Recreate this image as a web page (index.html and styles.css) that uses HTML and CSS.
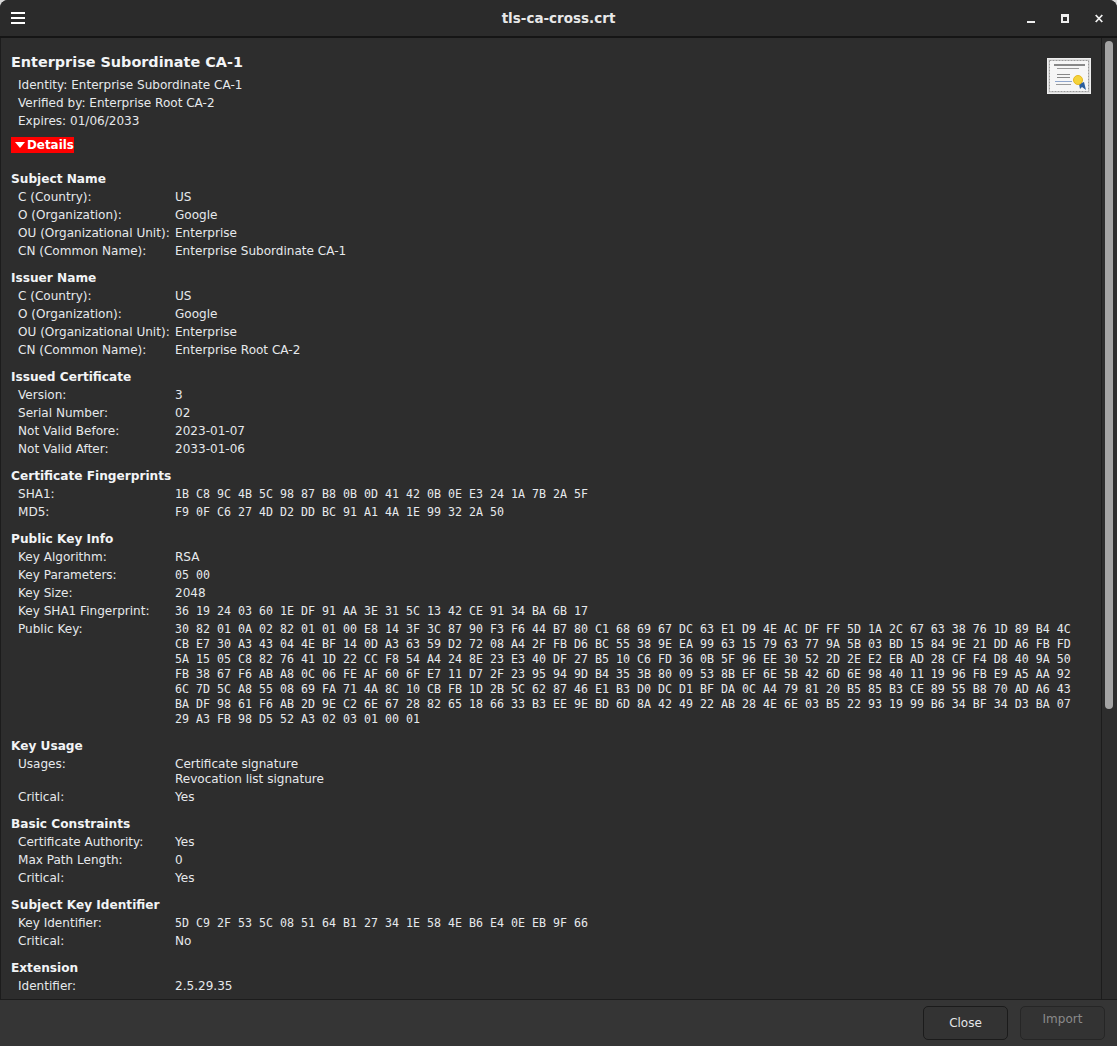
FILE: index.html
```html
<!DOCTYPE html>
<html lang="en">
<head>
  <meta charset="UTF-8">
  <title>tls-ca-cross.crt</title>
  <link rel="stylesheet" href="styles.css">
</head>
<body>
  <div class="window">
    <header class="titlebar">
      <svg class="menu-icon" width="14" height="12" viewBox="0 0 14 12"><path d="M0 0h14v2H0zM0 5h14v2H0zM0 10h14v2H0z" fill="#fff"/></svg>
      <div class="title">tls-ca-cross.crt</div>
      <div class="win-buttons">
        <svg width="8" height="9" viewBox="0 0 8 9"><path d="M0 7h8v2H0z" fill="#eee"/></svg>
        <svg width="8" height="9" viewBox="0 0 8 9"><path d="M0 0h8v9H0zM2 3v4h4V3z" fill="#eee" fill-rule="evenodd"/></svg>
        <svg width="8" height="9" viewBox="0 0 8 9"><path d="M.7 1l6.6 7M7.3 1L.7 8" stroke="#eee" stroke-width="1.8" fill="none"/></svg>
      </div>
    </header>

    <main class="main">
      <div class="content">
        <svg class="cert-icon" width="44" height="36" viewBox="0 0 44 36">
          <rect x=".5" y=".5" width="43" height="35" fill="#ddd" stroke="#eee"/>
          <rect x="2.5" y="2.5" width="39" height="31" fill="#f6f6f6" stroke="#999" stroke-dasharray="2 1"/>
          <rect x="7" y="6" width="31" height="2" fill="#888"/>
          <rect x="10" y="10" width="22" height="1" fill="#999"/>
          <rect x="10" y="16" width="13" height="1" fill="#888"/>
          <rect x="10" y="19" width="13" height="1" fill="#888"/>
          <rect x="8" y="23" width="17" height="1" fill="#8fa6cc"/>
          <rect x="9" y="26" width="15" height="1" fill="#999"/>
          <path d="M32 26l1 5 2-2 4 3-2-8z" fill="#2c5f9e"/>
          <circle cx="31" cy="22" r="4.5" fill="#f4d33a" stroke="#e8b820"/>
        </svg>

        <h1 class="cert-name">Enterprise Subordinate CA-1</h1>
        <p class="line">Identity: Enterprise Subordinate CA-1</p>
        <p class="line">Verified by: Enterprise Root CA-2</p>
        <p class="line">Expires: 01/06/2033</p>
        <div class="expander"><span class="arrow"></span>Details</div>

        <section class="group">
          <h2>Subject Name</h2>
          <div class="row"><span>C (Country):</span><span>US</span></div>
          <div class="row"><span>O (Organization):</span><span>Google</span></div>
          <div class="row"><span>OU (Organizational Unit):</span><span>Enterprise</span></div>
          <div class="row"><span>CN (Common Name):</span><span>Enterprise Subordinate CA-1</span></div>
        </section>

        <section class="group">
          <h2>Issuer Name</h2>
          <div class="row"><span>C (Country):</span><span>US</span></div>
          <div class="row"><span>O (Organization):</span><span>Google</span></div>
          <div class="row"><span>OU (Organizational Unit):</span><span>Enterprise</span></div>
          <div class="row"><span>CN (Common Name):</span><span>Enterprise Root CA-2</span></div>
        </section>

        <section class="group">
          <h2>Issued Certificate</h2>
          <div class="row"><span>Version:</span><span>3</span></div>
          <div class="row"><span>Serial Number:</span><span>02</span></div>
          <div class="row"><span>Not Valid Before:</span><span>2023-01-07</span></div>
          <div class="row"><span>Not Valid After:</span><span>2033-01-06</span></div>
        </section>

        <section class="group">
          <h2>Certificate Fingerprints</h2>
          <div class="row"><span>SHA1:</span><span class="hex">1B C8 9C 4B 5C 98 87 B8 0B 0D 41 42 0B 0E E3 24 1A 7B 2A 5F</span></div>
          <div class="row"><span>MD5:</span><span class="hex">F9 0F C6 27 4D D2 DD BC 91 A1 4A 1E 99 32 2A 50</span></div>
        </section>

        <section class="group">
          <h2>Public Key Info</h2>
          <div class="row"><span>Key Algorithm:</span><span>RSA</span></div>
          <div class="row"><span>Key Parameters:</span><span class="hex">05 00</span></div>
          <div class="row"><span>Key Size:</span><span>2048</span></div>
          <div class="row"><span>Key SHA1 Fingerprint:</span><span class="hex">36 19 24 03 60 1E DF 91 AA 3E 31 5C 13 42 CE 91 34 BA 6B 17</span></div>
          <div class="row"><span>Public Key:</span><span class="hex block">30 82 01 0A 02 82 01 01 00 E8 14 3F 3C 87 90 F3 F6 44 B7 80 C1 68 69 67 DC 63 E1 D9 4E AC DF FF 5D 1A 2C 67 63 38 76 1D 89 B4 4C
CB E7 30 A3 43 04 4E BF 14 0D A3 63 59 D2 72 08 A4 2F FB D6 BC 55 38 9E EA 99 63 15 79 63 77 9A 5B 03 BD 15 84 9E 21 DD A6 FB FD
5A 15 05 C8 82 76 41 1D 22 CC F8 54 A4 24 8E 23 E3 40 DF 27 B5 10 C6 FD 36 0B 5F 96 EE 30 52 2D 2E E2 EB AD 28 CF F4 D8 40 9A 50
FB 38 67 F6 AB A8 0C 06 FE AF 60 6F E7 11 D7 2F 23 95 94 9D B4 35 3B 80 09 53 8B EF 6E 5B 42 6D 6E 98 40 11 19 96 FB E9 A5 AA 92
6C 7D 5C A8 55 08 69 FA 71 4A 8C 10 CB FB 1D 2B 5C 62 87 46 E1 B3 D0 DC D1 BF DA 0C A4 79 81 20 B5 85 B3 CE 89 55 B8 70 AD A6 43
BA DF 98 61 F6 AB 2D 9E C2 6E 67 28 82 65 18 66 33 B3 EE 9E BD 6D 8A 42 49 22 AB 28 4E 6E 03 B5 22 93 19 99 B6 34 BF 34 D3 BA 07
29 A3 FB 98 D5 52 A3 02 03 01 00 01</span></div>
        </section>

        <section class="group">
          <h2>Key Usage</h2>
          <div class="row"><span>Usages:</span><span class="block-text">Certificate signature
Revocation list signature</span></div>
          <div class="row"><span>Critical:</span><span>Yes</span></div>
        </section>

        <section class="group">
          <h2>Basic Constraints</h2>
          <div class="row"><span>Certificate Authority:</span><span>Yes</span></div>
          <div class="row"><span>Max Path Length:</span><span>0</span></div>
          <div class="row"><span>Critical:</span><span>Yes</span></div>
        </section>

        <section class="group">
          <h2>Subject Key Identifier</h2>
          <div class="row"><span>Key Identifier:</span><span class="hex">5D C9 2F 53 5C 08 51 64 B1 27 34 1E 58 4E B6 E4 0E EB 9F 66</span></div>
          <div class="row"><span>Critical:</span><span>No</span></div>
        </section>

        <section class="group">
          <h2>Extension</h2>
          <div class="row"><span>Identifier:</span><span>2.5.29.35</span></div>
          <div class="row"><span>Value:</span><span></span></div>
        </section>
      </div>
      <div class="scrollbar"><div class="thumb"></div></div>
    </main>

    <footer class="footer">
      <button class="btn">Close</button>
      <button class="btn btn-disabled">Import</button>
    </footer>
  </div>
</body>
</html>
```

FILE: styles.css
```css
html, body {
  margin: 0;
  height: 100%;
  overflow: hidden;
  background-color: #d8d8d8;
}

.window {
  height: 1046px;
  display: flex;
  flex-direction: column;
  background-color: #2d2d2d;
  color: #e6e9ec;
  font-family: 'DejaVu Sans', sans-serif;
  font-size: 12.05px;
  border-radius: 8px 8px 0 0;
  overflow: hidden;
}

.titlebar {
  height: 36px;
  flex: none;
  display: flex;
  align-items: center;
  justify-content: space-between;
  padding: 0 14px 0 11px;
  border-bottom: 2px solid #151515;
  background-color: #2b2b2b;
  position: relative;
}

.title {
  position: absolute;
  left: 0;
  right: 0;
  text-align: center;
  font-weight: bold;
  font-size: 13.5px;
  color: #e8e8e8;
}

.win-buttons {
  display: flex;
  gap: 26px;
  align-items: center;
}

.main {
  flex: 1;
  min-height: 0;
  display: flex;
  border-left: 1px solid #1c1c1c;
  border-bottom: 1px solid #1c1c1c;
}

.content {
  flex: 1;
  min-width: 0;
  overflow: hidden;
  padding: 15px 10px 0;
  position: relative;
  border-right: 1px solid #1c1c1c;
}

.cert-icon {
  position: absolute;
  top: 20px;
  right: 10px;
}

.cert-name {
  margin: 0 0 5px;
  font-size: 14.4px;
  line-height: 18px;
  font-weight: bold;
  color: #f2f4f6;
}

.line {
  margin: 0 0 0 7px;
  line-height: 18px;
}

.expander {
  display: inline-flex;
  align-items: center;
  gap: 2px;
  height: 16px;
  margin-top: 7px;
  font-size: 11.9px;
  background-color: #ff0000;
  font-weight: bold;
  color: #fff;
  vertical-align: top;
}

.arrow {
  width: 0;
  height: 0;
  margin-left: 4px;
  border-left: 5px solid transparent;
  border-right: 5px solid transparent;
  border-top: 6px solid #fff;
}

.group {
  margin-top: 9px;
}

.expander + .group {
  margin-top: 17px;
}

.group h2 {
  margin: 0;
  font-size: 12.15px;
  line-height: 18px;
  font-weight: bold;
  color: #f2f4f6;
}

.row {
  display: grid;
  grid-template-columns: 157px 1fr;
  margin-left: 7px;
  line-height: 18px;
}

.hex {
  font-family: 'DejaVu Sans Mono', monospace;
  font-size: 11.63px;
}

.block {
  display: block;
  white-space: pre;
  line-height: 15px;
  padding: 2px 0 1px;
}

.block-text {
  white-space: pre;
  line-height: 15px;
  padding: 2px 0 1px;
}

.scrollbar {
  width: 15px;
  flex: none;
  padding: 3px 4px 0 3px;
  box-sizing: border-box;
}

.thumb {
  height: 668px;
  border-radius: 4px;
  background-color: #a4a4a4;
}

.footer {
  height: 46px;
  flex: none;
  box-sizing: border-box;
  display: flex;
  justify-content: flex-end;
  align-items: flex-start;
  gap: 12px;
  padding: 6px 12px 0;
  background-color: #353535;
}

.btn {
  width: 85px;
  height: 34px;
  border: 1px solid #1b1b1b;
  border-radius: 5px;
  background-color: #333;
  color: #e4e6e8;
  font-family: 'DejaVu Sans', sans-serif;
  font-size: 12px;
  padding: 0;
}

.btn-disabled {
  border-color: #262626;
  color: #8a8a8a;
  padding-bottom: 8px;
}
```
